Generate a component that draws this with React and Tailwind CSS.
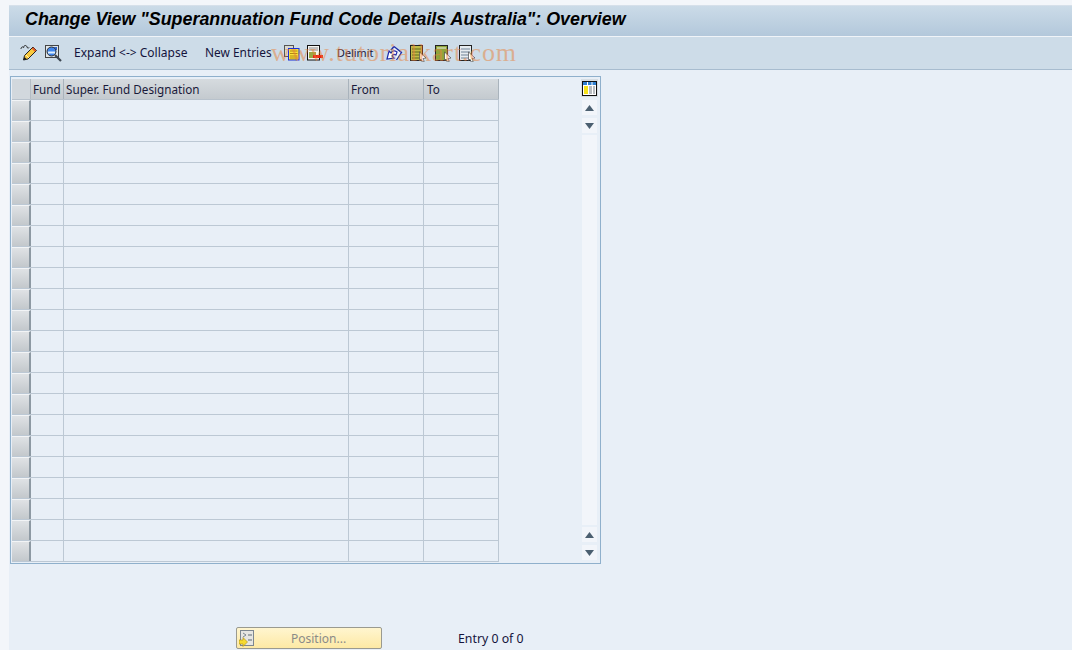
const rows = Array.from({ length: 22 }, (_, i) => i);

function Pencil() {
  return (
    <svg width="18" height="18" viewBox="0 0 18 18" className="shrink-0">
      <path d="M1 5c0-2 2-3 3-1M3.5 3c1-2 3-2 3.5 0 .5 1.500 1.500 1.500 2 .5" fill="none" stroke="#222" strokeWidth="1" />
      <path d="M3.500 16l1-4.500 8.500-8.500 3.500 3.500-8.500 8.500z" fill="#f8c93e" stroke="#222" strokeWidth="1" />
      <path d="M12.500 4l3 3" stroke="#e0592a" strokeWidth="2" />
      <path d="M6 11l3 3" stroke="#fff3b0" strokeWidth="1" />
      <path d="M3.500 16l1-3 2 2z" fill="#111" />
    </svg>
  );
}

function Glass() {
  return (
    <svg width="17" height="17" viewBox="0 0 17 17" className="shrink-0">
      <rect x="0.500" y="0.500" width="13" height="12" fill="#dfe6ea" stroke="#444" />
      <rect x="7" y="2" width="5" height="3" fill="#2f63c8" />
      <circle cx="6.500" cy="6.500" r="4.500" fill="#3f86ee" stroke="#333" />
      <path d="M3 7.500h7" stroke="#dff0ff" strokeWidth="2" />
      <path d="M10 10l6 6" stroke="#3d4650" strokeWidth="2.200" />
    </svg>
  );
}

function Copy() {
  return (
    <svg width="16" height="16" viewBox="0 0 16 16" className="shrink-0">
      <rect x="0.500" y="0.500" width="9" height="11" fill="#d8d8d0" stroke="#555" />
      <rect x="4.500" y="3.500" width="10.500" height="11.500" fill="#fbe23c" stroke="#1c2fd8" />
      <path d="M6 6h7.500M6 8.500h7.500M6 11h7.500M6 13h7.500" stroke="#b08a10" />
    </svg>
  );
}

function DeleteRow() {
  return (
    <svg width="16" height="16" viewBox="0 0 16 16" className="shrink-0">
      <rect x="0.500" y="0.500" width="12" height="14.500" fill="#f6f6f2" stroke="#111" />
      <path d="M2 3h9M2 5h9" stroke="#8a8a8a" />
      <rect x="2" y="7" width="7" height="6" fill="#9aa844" />
      <rect x="6" y="10" width="10" height="3" fill="#ee1c10" />
    </svg>
  );
}

function Delimit() {
  return (
    <svg width="17" height="17" viewBox="0 0 17 17" className="shrink-0">
      <path d="M8 1.500l7.500 6-5 7.500" fill="#eef2fa" stroke="#1d2ba8" strokeWidth="1.300" />
      <path d="M8 1.500L5 5" fill="none" stroke="#1d2ba8" strokeWidth="1.300" />
      <path d="M11 7c-3-2-5-1-6 1L3 6l-2 8 7-1-2-2c1-2 2-2 4-1z" fill="#fff" stroke="#1d2ba8" strokeWidth="1.200" />
    </svg>
  );
}

function SelIcon({ fill, lines, stroke }) {
  return (
    <svg width="17" height="17" viewBox="0 0 17 17" className="shrink-0">
      <rect x="0.500" y="0.500" width="12" height="15" fill={fill} stroke="#222" />
      <path d={lines} stroke={stroke} />
      <path d="M9.500 7l6.500 6-3 .5 1.200 3-2 .5-1.200-3-1.500 1.500z" fill="#fff" stroke="#333" strokeWidth="0.600" />
    </svg>
  );
}

function Config() {
  return (
    <svg width="15" height="15" viewBox="0 0 15 15">
      <rect x="0.500" y="0.500" width="14" height="14" fill="#fff" stroke="#111" />
      <rect x="1" y="1" width="13" height="3" fill="#2f7fd0" />
      <path d="M5.500 1v3M10 1v3" stroke="#fff" />
      <rect x="2" y="5" width="4" height="8" fill="#f6e21a" />
      <rect x="7" y="5" width="3" height="8" fill="#b8bcc0" />
      <rect x="11" y="5" width="2" height="8" fill="#b8bcc0" />
    </svg>
  );
}

function Tri({ down }) {
  return (
    <div className="h-[15px] w-[15px] bg-[#f2f5fa] flex items-center justify-center">
      <svg width="9" height="6" viewBox="0 0 9 6">
        <path d={down ? "M0 0h9L4.500 6z" : "M4.500 0L9 6H0z"} fill="#4b5f70" />
      </svg>
    </div>
  );
}

function PositionIcon() {
  return (
    <svg width="16" height="17" viewBox="0 0 16 17" className="shrink-0">
      <rect x="1.500" y="0.500" width="13" height="15" fill="#e6e6e2" stroke="#7d8790" />
      <path d="M9 5h4M9 10h4" stroke="#5d6b75" />
      <path d="M4 3l3 2-3 2" fill="none" stroke="#7d8790" />
      <path d="M0 10h4V7.500l4.500 4.500L4 16.500V14H0z" fill="#f6da30" stroke="#a88c10" strokeWidth="0.600" />
    </svg>
  );
}

function Head({ w, children }) {
  return (
    <div className={`${w} h-full shrink-0 border-r border-[#a9b3bc] pl-[2px] pt-[2px] flex items-center text-[11.700px] leading-none text-[#1a1a3a]`}>
      {children}
    </div>
  );
}

export default function App() {
  return (
    <div className="relative w-[1072px] h-[650px] overflow-hidden bg-[#f3f6fa] pt-[5px] pl-[9px] font-['Noto_Sans','Open_Sans',sans-serif]">
      <div className="h-[645px] flex flex-col bg-[#e8eff7]">
        <div className="h-[32px] shrink-0 border-b border-t border-[#d6e0ea] border-b-[#f0f4f8] bg-gradient-to-b from-[#cbdbe8] to-[#b3c8db] pl-[16px] pb-[3px] flex items-center font-['Liberation_Sans',sans-serif] text-[17.850px] font-bold italic text-black whitespace-nowrap">
          Change View "Superannuation Fund Code Details Australia": Overview
        </div>
        <div className="h-[33px] shrink-0 bg-[#cddce8] border-b border-[#a7bccf] flex items-center pl-[11px] text-[12px] text-[#14143c] whitespace-nowrap">
          <Pencil />
          <div className="ml-[7px]"><Glass /></div>
          <span className="ml-[12px] w-[113px]">Expand &lt;-&gt; Collapse</span>
          <span className="ml-[18px] w-[67px] text-[11.900px]">New Entries</span>
          <div className="ml-[12px]"><Copy /></div>
          <div className="ml-[7px]"><DeleteRow /></div>
          <span className="ml-[14px] w-[37px] text-[10.800px]">Delimit</span>
          <div className="ml-[12px]"><Delimit /></div>
          <div className="ml-[7px]"><SelIcon fill="#c0bc48" stroke="#5f6a1c" lines="M2 4h9M2 7h9M2 10h9M2 13h9" /></div>
          <div className="ml-[8px]"><SelIcon fill="#8da53a" stroke="#f0f0e8" lines="M2 3h9" /></div>
          <div className="ml-[7px]"><SelIcon fill="#e6ecf0" stroke="#6f8296" lines="M2 4h9M2 7h9M2 10h9M2 13h9" /></div>
        </div>

        <div className="ml-[1px] mt-[6px] w-[591px] h-[488px] shrink-0 border border-[#8fb0cc] bg-[#e8eff7] pl-[1px] pt-[2px] flex">
          <div className="w-[487px] shrink-0 flex flex-col">
            <div className="h-[21px] shrink-0 flex bg-gradient-to-b from-[#d6dbdf] to-[#c4cacf] border-b border-[#b8c2cc]">
              <div className="w-[19px] h-full shrink-0 border-r border-[#b4bcc4] bg-[#d2d8dd]" />
              <Head w="w-[33px]">Fund</Head>
              <Head w="w-[285px]">Super. Fund Designation</Head>
              <Head w="w-[75px]">From</Head>
              <Head w="w-[75px]"><span className="ml-[1px]">To</span></Head>
            </div>
            {rows.map((r) => (
              <div key={r} className="h-[21px] shrink-0 flex border-b border-[#bcc8d4]">
                <div className="w-[19px] h-full shrink-0 bg-gradient-to-b from-[#dfe2e5] to-[#c3c8cc] border-[#8d99a3] border-r-2 border-t border-t-[#f2f4f6]" />
                <div className="w-[33px] h-full shrink-0 border-r border-[#bcc8d4]" />
                <div className="w-[285px] h-full shrink-0 border-r border-[#bcc8d4]" />
                <div className="w-[75px] h-full shrink-0 border-r border-[#bcc8d4]" />
                <div className="w-[75px] h-full shrink-0 border-r border-[#bcc8d4]" />
              </div>
            ))}
          </div>
          <div className="ml-[82px] w-[17px] flex flex-col items-center">
            <div className="h-[18px] w-[17px] flex items-center justify-center bg-[#d6dde3] shrink-0">
              <Config />
            </div>
            <div className="mt-[3px]"><Tri /></div>
            <div className="mt-[3px]"><Tri down /></div>
            <div className="mt-[2px] w-[15px] flex-1 bg-[#f2f5fa]" />
            <div className="mt-[2px]"><Tri /></div>
            <div className="mt-[3px] mb-[3px]"><Tri down /></div>
          </div>
        </div>

        <div className="mt-[63px] flex items-center">
          <div className="ml-[227px] w-[146px] h-[22px] rounded-[2px] border border-[#9a9a90] bg-gradient-to-b from-[#fff5cf] to-[#fde9a4] flex items-center pl-[2px]">
            <PositionIcon />
            <span className="ml-[36px] pt-[2px] text-[12px] text-[#8b8b88]">Position...</span>
          </div>
          <span className="ml-[76px] pt-[2px] text-[12.300px] text-[#14143c]">Entry 0 of 0</span>
        </div>
      </div>

      <div className="absolute left-[271px] top-[39px] font-['Liberation_Serif',serif] text-[26px] leading-[28px] tracking-[0.900px] text-[#e8823a] opacity-50 whitespace-nowrap pointer-events-none">
        www.tutorialkart.com
      </div>
    </div>
  );
}
